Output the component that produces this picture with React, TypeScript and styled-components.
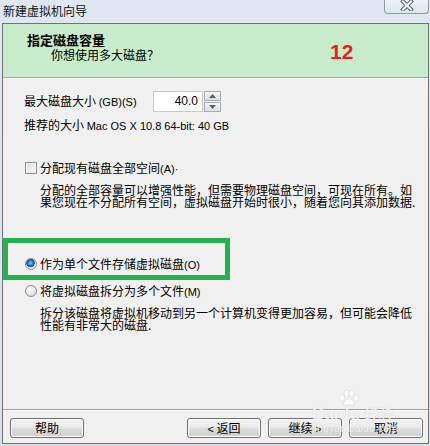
import React from 'react';
import styled, { createGlobalStyle } from 'styled-components';

const GlobalStyle = createGlobalStyle`
    html, body {
        margin: 0;
        padding: 0;
    }
    body {
        width: 430px;
        height: 446px;
        overflow: hidden;
        font-family: "Liberation Sans", "Noto Sans CJK SC", sans-serif;
        font-size: 12px;
        color: #000;
    }
`

function CloseIcon() {
    return (
        <svg width="14" height="11" viewBox="0 0 14 11">
            <path d="M3 1.5 L11 9.5 M11 1.5 L3 9.5" stroke="#5a6270" strokeWidth="4" strokeLinecap="square" fill="none" />
            <path d="M3 1.5 L11 9.5 M11 1.5 L3 9.5" stroke="#f4f6f9" strokeWidth="2" strokeLinecap="square" fill="none" />
        </svg>
    );
}

function Arrow({ up }: { up: boolean }) {
    return (
        <svg width="7" height="4" viewBox="0 0 7 4">
            <path d={up ? 'M0 4 L3.5 0 L7 4 Z' : 'M0 0 L3.5 4 L7 0 Z'} fill="#4d6185" />
        </svg>
    );
}

function Paw() {
    return (
        <svg width="22" height="16" viewBox="0 0 22 16">
            <g fill="rgba(255,255,255,0.8)" stroke="rgba(160,160,160,0.35)" strokeWidth="0.6">
                <ellipse cx="4" cy="8" rx="2.6" ry="3.2" />
                <ellipse cx="8.5" cy="3.5" rx="2.6" ry="3.2" />
                <ellipse cx="13.5" cy="3.5" rx="2.6" ry="3.2" />
                <ellipse cx="18" cy="8" rx="2.6" ry="3.2" />
                <path d="M5 15 C6 10 9 9 11 9 C13 9 16 10 17 15 Z" />
            </g>
        </svg>
    );
}

function App() {
    return (
        <>
            <GlobalStyle />
            <Window>
                <TitleBar>
                    <TitleText>新建虚拟机向导</TitleText>
                    <CloseButton><CloseIcon /></CloseButton>
                </TitleBar>
                <Panel>
                    <Header>
                        <HeaderText>
                            <HeaderTitle>指定磁盘容量</HeaderTitle>
                            <HeaderSub>你想使用多大磁盘？</HeaderSub>
                        </HeaderText>
                        <StepNumber>12</StepNumber>
                    </Header>
                    <Content>
                        <SizeRow>
                            <SizeLabel>最大磁盘大小 <Latin>(GB)(S)</Latin></SizeLabel>
                            <NumberField>
                                <NumberBox>40.0</NumberBox>
                                <Spinner>
                                    <SpinButton><Arrow up /></SpinButton>
                                    <SpinButton><Arrow up={false} /></SpinButton>
                                </Spinner>
                            </NumberField>
                        </SizeRow>
                        <Recommended>推荐的大小 <Latin>Mac OS X 10.8 64-bit: 40 GB</Latin></Recommended>
                        <OptionRow top={28}>
                            <CheckBox />
                            <span>分配现有磁盘全部空间<Latin>(A)·</Latin></span>
                        </OptionRow>
                        <Description>
                            分配的全部容量可以增强性能，但需要物理磁盘空间，可现在所有。如<br />
                            果您现在不分配所有空间，虚拟磁盘开始时很小，随着您向其添加数据.
                        </Description>
                        <OptionRow top={49}>
                            <Radio checked />
                            <span>作为单个文件存储虚拟磁盘<Latin>(O)</Latin></span>
                        </OptionRow>
                        <OptionRow top={13}>
                            <Radio />
                            <span>将虚拟磁盘拆分为多个文件<Latin>(M)</Latin></span>
                        </OptionRow>
                        <Description>
                            拆分该磁盘将虚拟机移动到另一个计算机变得更加容易，但可能会降低<br />
                            性能有非常大的磁盘.
                        </Description>
                    </Content>
                    <Footer>
                        <Button>帮助</Button>
                        <Spacer />
                        <Button><Latin>&lt;</Latin> 返回</Button>
                        <Button>继续 <Latin>&gt;</Latin></Button>
                        <Button>取消</Button>
                    </Footer>
                    <Highlight />
                    <Watermark>
                        <WatermarkRow>
                            <WatermarkBrand>Bai</WatermarkBrand>
                            <PawBox>
                                <Paw />
                                <WatermarkBrand>du</WatermarkBrand>
                            </PawBox>
                            <WatermarkCn>经验</WatermarkCn>
                        </WatermarkRow>
                        <WatermarkUrl>jingyan.baidu.com</WatermarkUrl>
                    </Watermark>
                </Panel>
            </Window>
        </>
    );
}

const Window = styled.div`
    width: 430px;
    height: 446px;
    box-sizing: border-box;
    padding: 0 1px 2px 2px;
    background: linear-gradient(#dfe7f1, #d6e0ec);
    display: flex;
    flex-direction: column;
`
const TitleBar = styled.div`
    height: 23px;
    flex-shrink: 0;
    display: flex;
    justify-content: space-between;
    align-items: flex-start;
`
const TitleText = styled.div`
    padding-left: 1px;
    line-height: 21px;
    font-family: "Noto Sans CJK SC", sans-serif;
    font-size: 12px;
    color: #111;
`
const CloseButton = styled.div`
    width: 45px;
    height: 14px;
    box-sizing: border-box;
    border: 1px solid #8d99a8;
    border-top: none;
    border-radius: 0 0 4px 4px;
    background: linear-gradient(#eef2f7, #dde5ee);
    display: flex;
    justify-content: center;
    align-items: flex-start;
`
const Panel = styled.div`
    flex: 1;
    position: relative;
    border: 1px solid #6f7377;
    background: #f0f0f0;
    display: flex;
    flex-direction: column;
`
const Header = styled.div`
    height: 53px;
    flex-shrink: 0;
    background: #c8ebcb;
    border-bottom: 1px solid #9da39e;
    box-shadow: 0 1px 0 #ffffff;
    display: flex;
    padding-left: 24px;
`
const HeaderText = styled.div`
    width: 303px;
    padding-top: 8px;
    font-family: "Noto Sans CJK SC", sans-serif;
`
const HeaderTitle = styled.div`
    font-size: 13px;
    font-weight: bold;
    line-height: 15px;
`
const HeaderSub = styled.div`
    padding-left: 24px;
    font-size: 12px;
    line-height: 15px;
`
const StepNumber = styled.div`
    margin-top: 17px;
    font-family: "Liberation Sans", sans-serif;
    font-size: 21px;
    font-weight: bold;
    line-height: 21px;
    color: #ec1c24;
`
const Content = styled.div`
    padding: 13px 0 0 21px;
    display: flex;
    flex-direction: column;
    font-family: "Noto Sans CJK SC", sans-serif;
`
const Latin = styled.span`
    font-family: "Liberation Sans", sans-serif;
    font-size: 11px;
`
const SizeRow = styled.div`
    height: 21px;
    display: flex;
    align-items: center;
`
const SizeLabel = styled.div`
    width: 129px;
    line-height: 14px;
`
const NumberField = styled.div`
    display: flex;
    gap: 1px;
`
const NumberBox = styled.div`
    width: 50px;
    height: 21px;
    box-sizing: border-box;
    border: 1px solid #c5c8cf;
    background: #fff;
    text-align: right;
    padding-right: 4px;
    font-family: "Liberation Sans", sans-serif;
    font-size: 12px;
    line-height: 19px;
`
const Spinner = styled.div`
    display: flex;
    flex-direction: column;
    gap: 1px;
`
const SpinButton = styled.div`
    width: 17px;
    height: 10px;
    box-sizing: border-box;
    border: 1px solid #a9acb2;
    background: linear-gradient(#f5f5f5, #dedede);
    display: flex;
    align-items: center;
    justify-content: center;
`
const Recommended = styled.div`
    margin-top: 6px;
    line-height: 14px;
`
const OptionRow = styled.div<{ top: number }>`
    margin-top: ${p => p.top}px;
    height: 14px;
    display: flex;
    align-items: center;
    gap: 3px;
    line-height: 14px;
`
const CheckBox = styled.div`
    width: 12px;
    height: 12px;
    margin-left: 1px;
    box-sizing: border-box;
    border: 1px solid #8e8f8f;
    background: linear-gradient(135deg, #dcdcdc, #fbfbfb);
    box-shadow: inset 0 0 0 1px #f4f4f4;
`
const Radio = styled.div<{ checked?: boolean }>`
    width: 12px;
    height: 12px;
    margin-left: 1px;
    box-sizing: border-box;
    border-radius: 50%;
    border: 1px solid #8e8f8f;
    background: ${p => p.checked
        ? 'radial-gradient(circle at 45% 40%, #8fd0ff 0, #2e8ad8 2px, #0d4f94 4px, #e8e8e8 4.5px, #fdfdfd 100%)'
        : 'radial-gradient(circle at 35% 35%, #fdfdfd 0, #e6e6e6 5px, #d0d0d0 100%)'};
`
const Description = styled.div`
    margin-top: 9px;
    padding-left: 16px;
    line-height: 12px;
    white-space: nowrap;
`
const Footer = styled.div`
    margin-top: auto;
    border-top: 1px solid #a0a0a0;
    box-shadow: inset 0 1px 0 #ffffff;
    padding: 8px 5px 5px 7px;
    display: flex;
    gap: 7px;
`
const Spacer = styled.div`
    flex: 1;
`
const Button = styled.div`
    width: 74px;
    height: 20px;
    box-sizing: border-box;
    border: 1px solid #707070;
    border-radius: 3px;
    background: linear-gradient(#f2f2f2 0%, #ebebeb 45%, #dddddd 50%, #cfcfcf 100%);
    box-shadow: inset 0 0 0 1px #fbfbfb;
    font-family: "Noto Sans CJK SC", sans-serif;
    font-size: 12px;
    line-height: 18px;
    text-align: center;
`
const Highlight = styled.div`
    position: absolute;
    left: 0;
    top: 214px;
    width: 227px;
    height: 42px;
    box-sizing: border-box;
    border: 5px solid #22b14c;
    pointer-events: none;
`
const Watermark = styled.div`
    position: absolute;
    left: 309px;
    top: 366px;
    display: flex;
    flex-direction: column;
    align-items: flex-start;
    color: rgba(255, 255, 255, 0.8);
    text-shadow: 0 0 1px rgba(120, 120, 120, 0.35);
    pointer-events: none;
`
const WatermarkRow = styled.div`
    display: flex;
    align-items: flex-end;
`
const WatermarkBrand = styled.span`
    font-family: "Liberation Sans", sans-serif;
    font-size: 17px;
    font-weight: bold;
    line-height: 15px;
`
const PawBox = styled.div`
    display: flex;
    flex-direction: column;
    align-items: center;
`
const WatermarkCn = styled.span`
    margin-left: 4px;
    font-family: "Noto Sans CJK SC", sans-serif;
    font-size: 14px;
    font-weight: bold;
    line-height: 15px;
`
const WatermarkUrl = styled.span`
    margin-top: 3px;
    font-family: "Liberation Sans", sans-serif;
    font-size: 10px;
    line-height: 10px;
    letter-spacing: 0.3px;
`

export default App;
